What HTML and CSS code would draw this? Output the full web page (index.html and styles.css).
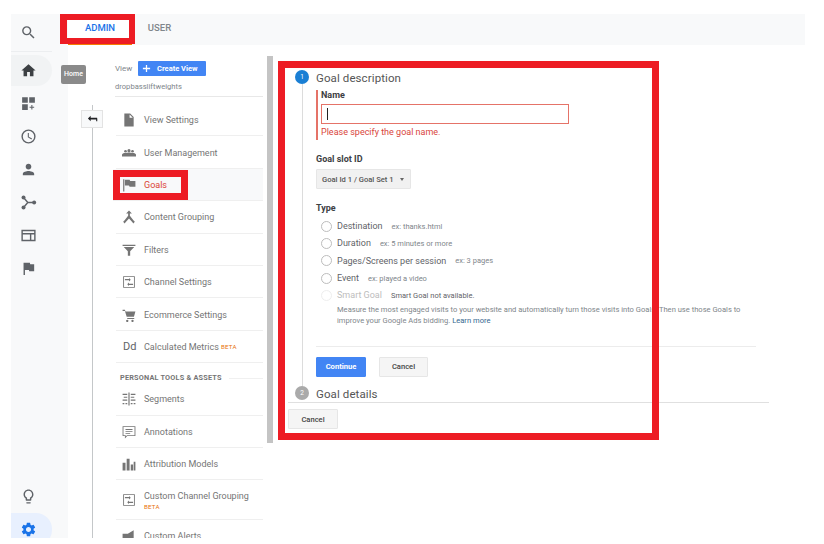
FILE: index.html
```html
<!DOCTYPE html>
<html lang="en">
<head>
<meta charset="utf-8">
<title>Admin - Goals</title>
<link rel="stylesheet" href="styles.css">
</head>
<body>
<div class="app">
  <aside class="rail">
    <div class="rail-top">
      <svg class="ri" viewBox="0 0 24 24"><path d="M15.5 14h-.79l-.28-.27A6.47 6.47 0 0 0 16 9.5 6.5 6.5 0 1 0 9.5 16c1.61 0 3.09-.59 4.23-1.57l.27.28v.79l5 4.99L20.49 19l-4.99-5zm-6 0C7.01 14 5 11.99 5 9.5S7.01 5 9.5 5 14 7.01 14 9.5 11.99 14 9.5 14z"/></svg>
    </div>
    <div class="rail-item home"><svg class="ri dark" viewBox="0 0 24 24"><path d="M10 20v-6h4v6h5v-8h3L12 3 2 12h3v8z"/></svg></div>
    <div class="rail-item"><svg class="ri" viewBox="0 0 24 24"><path d="M3 3h8v8H3zM13 3h8v8h-8zM3 13h8v8H3zM16 14h1.500v2.500H20V18h-2.500v2.500H16V18h-2.500v-1.500H16z"/></svg></div>
    <div class="rail-item"><svg class="ri" viewBox="0 0 24 24"><path d="M12 2a10 10 0 1 0 0 20 10 10 0 0 0 0-20zm0 18a8 8 0 1 1 0-16 8 8 0 0 1 0 16zm.5-13H11v6l5.200 3.200.8-1.300-4.500-2.700z"/></svg></div>
    <div class="rail-item"><svg class="ri" viewBox="0 0 24 24"><path d="M12 12c2.210 0 4-1.790 4-4s-1.790-4-4-4-4 1.790-4 4 1.790 4 4 4zm0 2c-2.670 0-8 1.340-8 4v2h16v-2c0-2.660-5.330-4-8-4z"/></svg></div>
    <div class="rail-item"><svg class="ri" viewBox="0 0 24 24"><circle cx="5" cy="5" r="2.800"/><circle cx="5" cy="19" r="2.800"/><circle cx="20" cy="12" r="2.800"/><path d="M5 5l6 7H20M11 12l-6 7" fill="none" stroke="#5f6368" stroke-width="2"/></svg></div>
    <div class="rail-item"><svg class="ri" viewBox="0 0 24 24"><path d="M2 4h20v16H2zm2 2v2.500h16V6zm0 4.500V18h10v-7.500zm12 0V18h4v-7.500z"/></svg></div>
    <div class="rail-item"><svg class="ri" viewBox="0 0 24 24"><path d="M14.400 6L14 4H5v17h2v-7h5.600l.4 2h7V6z"/></svg></div>
    <div class="rail-spacer"></div>
    <div class="rail-item"><svg class="ri" viewBox="0 0 24 24"><path d="M9 21c0 .55.45 1 1 1h4c.55 0 1-.45 1-1v-1H9v1zm3-19C8.140 2 5 5.140 5 9c0 2.380 1.190 4.470 3 5.740V17c0 .55.45 1 1 1h6c.55 0 1-.45 1-1v-2.260c1.810-1.270 3-3.360 3-5.740 0-3.860-3.140-7-7-7zm2.850 11.100l-.85.6V16h-4v-2.300l-.85-.6A4.997 4.997 0 0 1 7 9c0-2.760 2.240-5 5-5s5 2.240 5 5c0 1.630-.8 3.160-2.150 4.100z"/></svg></div>
    <div class="rail-item gear"><svg class="ri blue" viewBox="0 0 24 24"><path d="M19.140 12.940c.04-.3.06-.61.06-.94 0-.32-.02-.64-.07-.94l2.030-1.580a.49.49 0 0 0 .12-.61l-1.920-3.320a.488.488 0 0 0-.59-.22l-2.390.96c-.5-.38-1.030-.7-1.620-.94l-.36-2.540a.484.484 0 0 0-.48-.41h-3.840c-.24 0-.43.17-.47.41l-.36 2.540c-.59.24-1.130.57-1.620.94l-2.390-.96c-.22-.08-.47 0-.59.22L2.740 8.870c-.12.21-.08.47.12.61l2.030 1.580c-.05.3-.09.63-.09.94s.02.64.07.94l-2.030 1.580a.49.49 0 0 0-.12.61l1.920 3.320c.12.22.37.29.59.22l2.390-.96c.5.38 1.030.7 1.620.94l.36 2.540c.05.24.24.41.48.41h3.840c.24 0 .44-.17.47-.41l.36-2.540c.59-.24 1.130-.56 1.620-.94l2.390.96c.22.08.47 0 .59-.22l1.920-3.320c.12-.22.07-.47-.12-.61l-2.010-1.580zM12 15.600c-1.980 0-3.600-1.620-3.600-3.600s1.620-3.600 3.600-3.600 3.600 1.620 3.600 3.600-1.620 3.600-3.600 3.600z"/></svg></div>
  </aside>

  <div class="main">
    <div class="tabs">
      <div class="tab active">ADMIN</div>
      <div class="tab">USER</div>
    </div>
    <div class="body">
      <div class="tree">
        <button class="back"><svg viewBox="0 0 12 12"><path d="M1 5l3-3v2h7v2H4v2z" fill="#202124"/><path d="M10 5h1.200v3H10z" fill="#202124"/></svg></button>
      </div>
      <nav class="nav">
        <div class="view-row">
          <span class="view-label">View</span>
          <span class="create"><svg viewBox="0 0 10 10"><path d="M4.300 1h1.400v3.300H9v1.400H5.700V9H4.300V5.700H1V4.300h3.300z" fill="#fff"/></svg>Create View</span>
        </div>
        <div class="view-name">dropbassliftweights</div>

        <div class="item"><svg class="ni" viewBox="0 0 24 24"><path d="M4 1h10l6 6v16H4zm9 1.500V8h5.500z"/></svg>View Settings</div>
        <div class="item"><svg class="ni" viewBox="0 0 24 24"><circle cx="6" cy="9" r="2.300"/><circle cx="12" cy="8" r="2.700"/><circle cx="18" cy="9" r="2.300"/><path d="M0 18v-3c0-2 3-3 5-3 .6 0 1.100.1 1.500.2C8 11.500 10 11 12 11s4 .5 5.500 1.200c.4-.1.9-.2 1.500-.2 2 0 5 1 5 3v3z"/></svg>User Management</div>
        <div class="item selected"><svg class="ni" viewBox="0 0 24 24"><path d="M2 2h2v21H2zM5 3h8l1 2h9v10H13l-1-2H5z"/></svg><span class="goals">Goals</span></div>
        <div class="item"><svg class="ni" viewBox="0 0 24 24"><path d="M12 1l5 5h-3.500v4l6 7.500L22 20l-2.500 3-2-2.500-5.500-6-5.500 6-2 2.500L2 20l2.500-2.500 6-7.500V6H7z"/></svg>Content Grouping</div>
        <div class="item"><svg class="ni" viewBox="0 0 24 24"><path d="M1 3h22v2H1zM3 7h18l-7 7v8h-4v-8z"/></svg>Filters</div>
        <div class="item"><svg class="ni" viewBox="0 0 24 24"><path d="M2 2h20v20H2zm1.500 1.500v17h17v-17zM5 7h7V5l3 3-3 3V9H5zm14 8h-7v-2l-3 3 3 3v-2h7z"/></svg>Channel Settings</div>
        <div class="item"><svg class="ni" viewBox="0 0 24 24"><path d="M1 3h4l1 3h17l-2.500 9H8L5 5H1zM9 17h12v2H9zM9 20a2 2 0 1 0 .01 0zM18 20a2 2 0 1 0 .01 0z"/></svg>Ecommerce Settings</div>
        <div class="item"><span class="dd">Dd</span>Calculated Metrics<span class="beta">BETA</span></div>
        <div class="section">PERSONAL TOOLS &amp; ASSETS</div>
        <div class="item"><svg class="ni" viewBox="0 0 24 24"><path d="M11 1h2v22h-2zM1 3h8v2H1zM15 3h8v2h-8zM3 8h6v2H3zM15 8h6v2h-6zM1 13h8v2H1zM15 13h8v2h-8zM1 19h3v2H1zM6 19h3v2H6zM15 19h3v2h-3zM20 19h3v2h-3z"/></svg>Segments</div>
        <div class="item"><svg class="ni" viewBox="0 0 24 24"><path d="M1 2h22v17H9l-4 4v-4H1zm1.500 1.500v14h4v2l2-2h13v-14zM6 7h12v1.500H6zM6 10.500h12V12H6zM6 14h8v1.500H6z"/></svg>Annotations</div>
        <div class="item"><svg class="ni" viewBox="0 0 24 24"><path d="M1 10h5v13H1zM8 3h5v20H8zM15 13h4v10h-4zM20 8h3v15h-3z"/></svg>Attribution Models</div>
        <div class="item tall"><svg class="ni" viewBox="0 0 24 24"><path d="M2 2h20v20H2zm1.500 1.500v17h17v-17zM5 7h7V5l3 3-3 3V9H5zm14 8h-7v-2l-3 3 3 3v-2h7z"/></svg><span class="stack">Custom Channel Grouping<span class="beta under">BETA</span></span></div>
        <div class="item"><svg class="ni" viewBox="0 0 24 24"><path d="M1 8h9l10-6v20l-10-6H8l1 7H5l-1-7H1z"/></svg>Custom Alerts</div>
      </nav>
      <div class="scrollbar"></div>

      <form class="form">
        <div class="step-head">
          <span class="num">1</span><span class="step-title">Goal description</span>
        </div>
        <div class="step-body">
          <div class="name-block">
            <div class="label">Name</div>
            <div class="input"><span class="caret"></span></div>
            <div class="error">Please specify the goal name.</div>
          </div>
          <div class="label slot">Goal slot ID</div>
          <div class="select">Goal Id 1 / Goal Set 1<span class="tri"></span></div>
          <div class="label type">Type</div>
          <div class="radios">
            <div class="radio-row"><span class="radio"></span><span class="rl">Destination</span><span class="ex">ex: thanks.html</span></div>
            <div class="radio-row"><span class="radio"></span><span class="rl">Duration</span><span class="ex">ex: 5 minutes or more</span></div>
            <div class="radio-row"><span class="radio"></span><span class="rl">Pages/Screens per session</span><span class="ex">ex: 3 pages</span></div>
            <div class="radio-row"><span class="radio"></span><span class="rl">Event</span><span class="ex">ex: played a video</span></div>
            <div class="radio-row off"><span class="radio"></span><span class="rl">Smart Goal</span><span class="ex">Smart Goal not available.</span></div>
          </div>
          <p class="desc">Measure the most engaged visits to your website and automatically turn those visits into Goals. Then use those Goals to<br>improve your Google Ads bidding. <span class="link">Learn more</span></p>
          <div class="rule"></div>
          <div class="buttons">
            <span class="btn primary">Continue</span>
            <span class="btn">Cancel</span>
          </div>
        </div>
        <div class="step-head">
          <span class="num grey">2</span><span class="step-title">Goal details</span>
        </div>
        <div class="foot"><span class="btn">Cancel</span></div>
      </form>
    </div>
  </div>
</div>

<div class="tooltip">Home</div>
<div class="mark mark-admin"></div>
<div class="mark mark-goals"></div>
<div class="mark mark-form"></div>
</body>
</html>
```
FILE: styles.css
```css
* { box-sizing: border-box; }
html, body { margin: 0; padding: 0; background: #fff; }
body { width: 824px; height: 544px; overflow: hidden; position: relative; font-family: Roboto, "Liberation Sans", sans-serif; color: #5f6368; }

.app { display: flex; width: 794px; height: 524px; margin: 14px 0 0 11px; overflow: hidden; }

.rail { width: 57px; flex: none; background: #f8f9fa; display: flex; flex-direction: column; }
.rail-top { height: 38px; width: 41px; border-bottom: 1px solid #eceef0; display: flex; align-items: center; padding-left: 8.500px; flex: none; }
.rail-item { height: 33px; width: 41px; display: flex; align-items: center; padding-left: 8.500px; border-radius: 0 16px 16px 0; flex: none; }
.rail-item.home { background: #f1f3f4; height: 31px; margin-top: 3px; margin-bottom: 1px; }
.rail-spacer { flex: 1; }
.gear { background: #e8f0fe; margin-bottom: -8px; }
.ri { width: 17px; height: 17px; fill: #5f6368; display: block; }
.ri.dark { fill: #3c4043; }
.ri.blue { fill: #1a73e8; }

.main { flex: 1; min-width: 0; display: flex; flex-direction: column; }
.tabs { height: 31px; flex: none; background: #f8f9fa; display: flex; align-items: center; font-size: 9.500px; font-weight: 500; }
.tab { width: 64px; height: 31px; line-height: 28px; text-align: center; color: #80868b; }
.tab.active { color: #1a73e8; background: #fff; border-bottom: 2px solid #f57c00; }
.tab + .tab { width: 55px; text-align: center; }

.body { flex: 1; display: flex; min-height: 0; padding-top: 11px; }

.tree { width: 47px; flex: none; position: relative; }
.tree::before { content: ""; display: block; position: absolute; left: 24px; top: 49px; bottom: 0; width: 1px; background: #c4c7c9; }
.back { position: absolute; left: 13px; top: 54px; width: 22px; height: 18px; padding: 0; background: #f8f9fa; border: 1px solid #e3e3e3; display: flex; align-items: center; justify-content: center; }
.back svg { width: 11px; height: 11px; display: block; }

.nav { width: 148px; flex: none; font-size: 9px; color: #757575; }
.view-row { height: 19px; display: flex; align-items: center; font-size: 8px; margin-top: 3px; }
.view-label { width: 23px; color: #80868b; }
.create { width: 68px; height: 15px; background: #4285f4; color: #fff; font-weight: 700; font-size: 7.500px; display: flex; align-items: center; padding-left: 4px; gap: 6px; border-radius: 1px; }
.create svg { width: 9px; height: 9px; flex: none; }
.view-name { height: 19px; padding-top: 3px; line-height: 12px; font-size: 7.600px; color: #80868b; border-bottom: 1px solid #e8e8e8; margin-bottom: 7px; }

.item { height: 32.400px; display: flex; align-items: center; border-bottom: 1px solid #efefef; padding: 1px 0 0 6px; margin-left: 1px; white-space: nowrap; }
.item.selected { background: #f8f9fa; margin-left: -2px; padding-left: 9px; }
.item.tall { height: 39.500px; }
.ni { width: 14px; height: 14px; fill: #757575; margin-right: 8px; flex: none; }
.dd { width: 14px; margin-right: 8px; font-size: 11px; color: #5f6368; flex: none; padding-left: 1px; }
.goals { color: #db4437; }
.beta { font-size: 6.200px; color: #e8710a; margin-left: 2px; letter-spacing: .2px; }
.stack { display: flex; flex-direction: column; align-items: flex-start; line-height: 12px; padding-top: 2px; }
.under { margin-left: 0; line-height: 10px; }
.section { height: 20px; padding: 10px 0 0 5px; font-size: 7.300px; font-weight: 700; color: #757575; letter-spacing: .2px; line-height: 10px; display: flex; gap: 7px; }
.section::after { content: ""; flex: 1; height: 1px; background: #f0f0f0; margin-top: 5px; }

.scrollbar { width: 6px; height: 387px; flex: none; margin-left: 4px; background: #c4c4c4; }

.form { width: 481px; flex: none; margin-left: 15px; padding-top: 14px; font-size: 9px; }
.step-head { display: flex; align-items: center; gap: 7px; height: 14px; margin-left: 7px; }
.num { width: 14px; height: 14px; border-radius: 50%; background: #1a7fd4; color: #fff; font-size: 6.500px; line-height: 14px; text-align: center; flex: none; }
.num.grey { background: #aaa; }
.step-title { font-size: 11.500px; color: #555; letter-spacing: .1px; line-height: 14px; padding-top: 1px; }
.step-body { margin-left: 14px; border-left: 1px solid #dcdcdc; padding: 6px 13px 10px 13px; height: 302px; }

.name-block { border-left: 2px solid #e57368; padding: 0 0 0 3px; height: 50px; }
.label { font-size: 9px; font-weight: 700; color: #3c4043; line-height: 10px; }
.input { height: 20px; width: 248px; margin-top: 4px; border: 1px solid #e57368; padding: 3px 0 0 5px; }
.caret { display: block; width: 1px; height: 12px; background: #222; }
.error { margin-top: 2px; color: #d9453c; line-height: 12px; }
.slot { margin-top: 14px; }
.select { width: 95px; height: 20px; margin-top: 5px; background: #f1f1f1; border: 1px solid #e6e6e6; border-radius: 1px; font-size: 7.600px; font-weight: 500; color: #555; display: flex; align-items: center; padding-left: 5px; gap: 6px; }
.tri { width: 0; height: 0; border-left: 2.500px solid transparent; border-right: 2.500px solid transparent; border-top: 3px solid #666; }
.type { margin-top: 14px; }
.radios { margin-top: 4.500px; }
.radio-row { height: 17.300px; display: flex; align-items: center; padding-left: 5px; }
.radio { width: 11px; height: 11px; border: 1px solid #bdbdbd; border-radius: 50%; margin-right: 5px; flex: none; background: #fff; }
.rl { color: #5f6368; margin-right: 9px; }
.ex { font-size: 7.500px; color: #80868b; }
.off .radio { border-color: #eee; }
.off .rl { color: #bdbdbd; }
.off .ex { color: #5f6368; }
.desc { margin: .5px 0 0 21px; font-size: 7.580px; line-height: 11px; color: #80868b; white-space: nowrap; }
.link { color: #33678f; }
.rule { height: 1px; background: #ececec; margin-top: 19.500px; }
.buttons { display: flex; gap: 13px; margin-top: 10px; }
.btn { display: flex; align-items: center; justify-content: center; width: 49px; height: 20px; background: #f5f5f5; border: 1px solid #e6e6e6; border-radius: 1px; font-size: 7.600px; font-weight: 500; color: #444; }
.btn.primary { width: 50px; background: #4285f4; border-color: #4285f4; color: #fff; font-weight: 700; }
.foot { margin-top: 2px; border-top: 1px solid #e0e0e0; padding-top: 6px; }
.foot .btn { width: 50px; }

.tooltip { position: absolute; left: 61px; top: 65px; width: 25px; height: 19px; background: #8a8a8a; border-radius: 2px; color: #fff; font-size: 7px; font-weight: 500; line-height: 18px; text-align: center; }
.mark { position: absolute; border: 7px solid #ed1c24; }
.mark-admin { left: 60px; top: 14px; width: 75px; height: 30px; border-width: 6px 6px 6px 7px; }
.mark-goals { left: 113px; top: 170px; width: 75px; height: 30px; }
.mark-form { left: 278px; top: 61px; width: 381px; height: 379px; }
```
